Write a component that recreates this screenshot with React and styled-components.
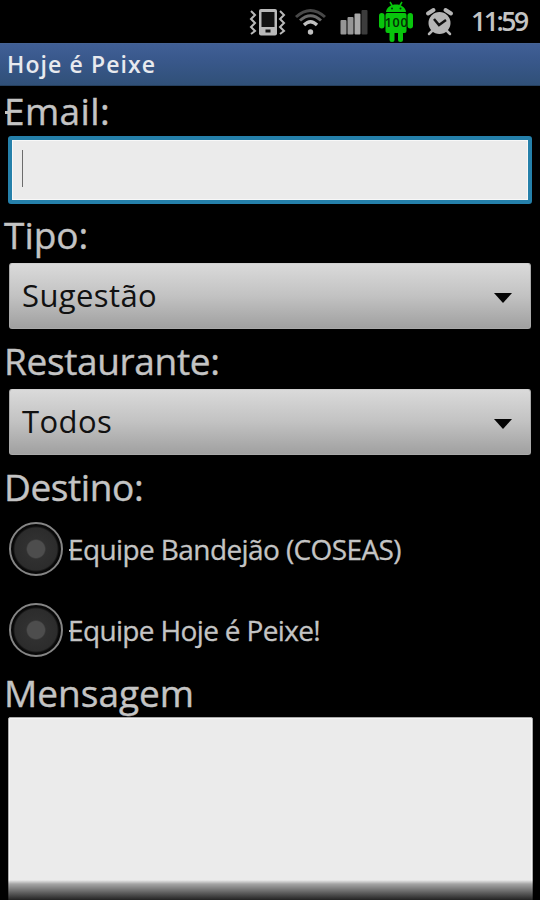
import { useState } from 'react';
import styled, { createGlobalStyle } from 'styled-components';


const GlobalStyle = createGlobalStyle`
  * {
    box-sizing: border-box;
  }
  body {
    margin: 0;
    background: #000;
    overflow: hidden;
    font-family: 'Open Sans', 'Noto Sans', sans-serif;
  }
`;

const Screen = styled.div`
  width: 540px;
  height: 900px;
  overflow: hidden;
  background: #000;
  color: #c4c4c4;
  position: relative;
`;

const StatusBar = styled.div`
  height: 43px;
  display: flex;
  align-items: flex-start;
  padding-left: 248px;
`;

const StatusIcon = styled.svg`
  display: block;
  flex: none;
  width: ${({ $w }) => $w}px;
  height: 43px;
`;

const Clock = styled.span`
  font-size: 26.5px;
  font-weight: 600;
  line-height: 42px;
  letter-spacing: ${({ $spacing }) => $spacing}px;
  color: #c4c4c4;
`;

const TitleBar = styled.div`
  height: 43px;
  padding-left: 7px;
  background: linear-gradient(#405f96 0%, #39588b 40%, #305078 100%);
  border-top: 1px solid #466394;
  border-bottom: 1px solid #26405f;
  color: #e8eaee;
  font-size: 23px;
  font-weight: 600;
  line-height: 40px;
  letter-spacing: ${({ $spacing }) => $spacing}px;
`;

const Form = styled.form`
  display: flex;
  flex-direction: column;
`;

const Label = styled.label`
  height: 50px;
  margin-top: ${({ $top }) => $top || 0}px;
  padding-left: 4px;
  font-size: 37px;
  line-height: 50px;
  letter-spacing: ${({ $spacing }) => $spacing || 0}px;
  white-space: nowrap;
  -webkit-text-stroke: 0.4px currentColor;
`;

// the crossbar of the capital E sticks out on the left of its stem
const BarredE = styled.span`
  position: relative;
  &::before {
    content: '';
    position: absolute;
    left: 0.02em;
    top: 0.7em;
    width: 0.12em;
    height: 0.075em;
    background: currentColor;
  }
`;

const EmailInput = styled.input`
  height: 68px;
  margin: 0 8px;
  padding: 0 10px;
  border: 4px solid #2580aa;
  border-radius: 3px;
  outline: none;
  background: #ebebeb;
  box-shadow: inset 0 0 0 1px #f8f8f8;
`;

const InputWrap = styled.div`
  position: relative;
  display: grid;
`;

const Caret = styled.span`
  position: absolute;
  left: 22px;
  top: 14px;
  width: 1px;
  height: 37px;
  background: #6c6c6c;
`;

const Spinner = styled.button`
  display: flex;
  align-items: center;
  justify-content: space-between;
  height: 66px;
  margin: 3px 9px 0;
  padding: 0 18px 0 12px;
  border: 1px solid #a9a9a9;
  border-top-color: #d0d0d0;
  border-radius: 3px;
  background: linear-gradient(#dadada, #c2c2c2 50%, #a0a0a0);
  color: #111;
  font-family: inherit;
  font-size: 31px;
  letter-spacing: ${({ $spacing }) => $spacing || 0}px;
`;

const SpinnerText = styled.span`
  line-height: 42px;
  margin-top: -3px;
`;

const Arrow = styled.span`
  margin-top: 4px;
  border: 9.5px solid transparent;
  border-top: 10px solid #050505;
  border-bottom: 0;
`;

const RadioRow = styled.div`
  display: flex;
  align-items: center;
  height: 81px;
  padding-left: 9px;
  font-size: 28px;
  white-space: nowrap;
  cursor: pointer;
`;

const RadioList = styled.div`
  margin-top: -4px;
`;

const RadioDot = styled.span`
  flex: none;
  width: 54px;
  height: 54px;
  margin-right: 5px;
  border: 2.5px solid #858585;
  border-radius: 50%;
  background: ${({ $on }) =>
    `radial-gradient(circle, ${$on ? '#7ed321' : '#4d4d4d'} 8.5px, #303030 10px, #2c2c2c 21px, #080808 23px)`};
`;

const RadioText = styled.span`
  letter-spacing: ${({ $spacing }) => $spacing || 0}px;
  -webkit-text-stroke: 0.3px currentColor;
`;

const Message = styled.textarea`
  height: 190px;
  margin: -1px 7px 0 8px;
  border: 1px solid #aaa;
  border-radius: 2px;
  outline: none;
  resize: none;
  background: #ebebeb;
  box-shadow: inset 0 0 0 1px #f5f5f5;
`;

const Fade = styled.div`
  position: absolute;
  left: 0;
  right: 0;
  bottom: 0;
  height: 20px;
  pointer-events: none;
  background: linear-gradient(rgba(0, 0, 0, 0), rgba(0, 0, 0, 0.3) 20%, rgba(0, 0, 0, 0.85));
`;


const VibrateIcon = () => (
  <StatusIcon $w={46} viewBox="0 0 46 43" fill="none" stroke="#b9b9b9">
    <path d="M3 11l4 4-4 4 4 4-4 4 4 4-4 3" strokeWidth="2" />
    <path d="M32 11l4 4-4 4 4 4-4 4 4 4-4 3" strokeWidth="2" />
    <rect x="11" y="9" width="18" height="26.5" rx="2" fill="#b9b9b9" stroke="none" />
    <rect x="13.5" y="12" width="13" height="15" fill="#111" stroke="none" />
    <rect x="17.5" y="29.5" width="5" height="3" fill="#111" stroke="none" />
  </StatusIcon>
);

const WifiIcon = () => (
  <StatusIcon $w={44} viewBox="0 0 44 43" fill="none">
    <path d="M2 17Q16.5 4 31 17" stroke="#484848" strokeWidth="3" />
    <path d="M6 20.5Q16.5 11 27 20.5" stroke="#686868" strokeWidth="3" />
    <path d="M10 25Q16.5 18.5 23 25" stroke="#c0c0c0" strokeWidth="3.2" />
    <circle cx="16.5" cy="32" r="2.7" fill="#c0c0c0" />
  </StatusIcon>
);

const SignalIcon = () => (
  <StatusIcon $w={40} viewBox="0 0 40 43">
    <rect x="2.5" y="20" width="6" height="14.5" rx="1" fill="#969696" />
    <rect x="9.5" y="17" width="6" height="17.5" rx="1" fill="#969696" />
    <rect x="16.5" y="13.5" width="6" height="21" rx="1" fill="#a8a8a8" />
    <rect x="23.5" y="10" width="6" height="24.5" rx="1" fill="#3c3c3c" />
  </StatusIcon>
);

const BatteryIcon = () => (
  <StatusIcon $w={47} viewBox="0 0 47 43">
    <g fill="#08c50c">
      <path d="M8 12C9 2 27 2 28 12z" />
      <path d="M12 2l3 5M24 2l-3 5" stroke="#08c50c" strokeWidth="1.5" />
      <rect x="7.5" y="13" width="21" height="20" rx="2" />
      <rect x="1" y="13" width="5.5" height="15.5" rx="2.7" />
      <rect x="29.500" y="13" width="5.5" height="15.5" rx="2.7" />
      <rect x="11.5" y="31" width="5" height="11" rx="2.5" />
      <rect x="20" y="31" width="5" height="11" rx="2.5" />
    </g>
    <circle cx="14" cy="8.5" r="1" fill="#031" />
    <circle cx="22.5" cy="8.5" r="1" fill="#031" />
    <text x="18.5" y="26.500" textAnchor="middle" fontSize="12.500" fontWeight="600" letterSpacing="0.700" fill="#042b04">100</text>
  </StatusIcon>
);

const AlarmIcon = () => (
  <StatusIcon $w={46} viewBox="0 0 46 43" fill="none">
    <path d="M3 13.500L8.500 10M20.500 10L26 13.500" stroke="#b5b5b5" strokeWidth="4" strokeLinecap="round" />
    <path d="M7 31l-3 3M22 31l3 3" stroke="#b5b5b5" strokeWidth="2.5" strokeLinecap="round" />
    <circle cx="14.5" cy="23" r="11" fill="#b5b5b5" />
    <path d="M9 19l5 6 7-5" stroke="#111" strokeWidth="2.5" />
  </StatusIcon>
);


const destinos = [
  { id: 'coseas', rest: 'quipe Bandejão (COSEAS)', spacing: -0.6 },
  { id: 'hoje', rest: 'quipe Hoje é Peixe!', spacing: -0.65 },
];

const App = () => {
  const [email, setEmail] = useState('');
  const [destino, setDestino] = useState(null);

  return (
    <>
      <GlobalStyle />
      <Screen>
        <StatusBar>
          <VibrateIcon />
          <WifiIcon />
          <SignalIcon />
          <BatteryIcon />
          <AlarmIcon />
          <Clock $spacing={-2.4}>11:59</Clock>
        </StatusBar>
        <TitleBar $spacing={1.1}>Hoje é Peixe</TitleBar>
        <Form>
          <Label $spacing={0.4}><BarredE>E</BarredE>mail:</Label>
          <InputWrap>
            <EmailInput value={email} onChange={(e) => setEmail(e.target.value)} />
            <Caret />
          </InputWrap>
          <Label $top={6}>Tipo:</Label>
          <Spinner type="button" $spacing={0.4}>
            <SpinnerText>Sugestão</SpinnerText>
            <Arrow />
          </Spinner>
          <Label $top={7} $spacing={-0.35}>Restaurante:</Label>
          <Spinner type="button" $spacing={0.4}>
            <SpinnerText>Todos</SpinnerText>
            <Arrow />
          </Spinner>
          <Label $top={7} $spacing={-0.4}>Destino:</Label>
          <RadioList>
            {destinos.map((d) => (
              <RadioRow key={d.id} onClick={() => setDestino(d.id)}>
                <RadioDot $on={destino === d.id} />
                <RadioText $spacing={d.spacing}><BarredE>E</BarredE>{d.rest}</RadioText>
              </RadioRow>
            ))}
          </RadioList>
          <Label $top={-2}>Mensagem</Label>
          <Message />
        </Form>
        <Fade />
      </Screen>
    </>
  );
};

export default App;
